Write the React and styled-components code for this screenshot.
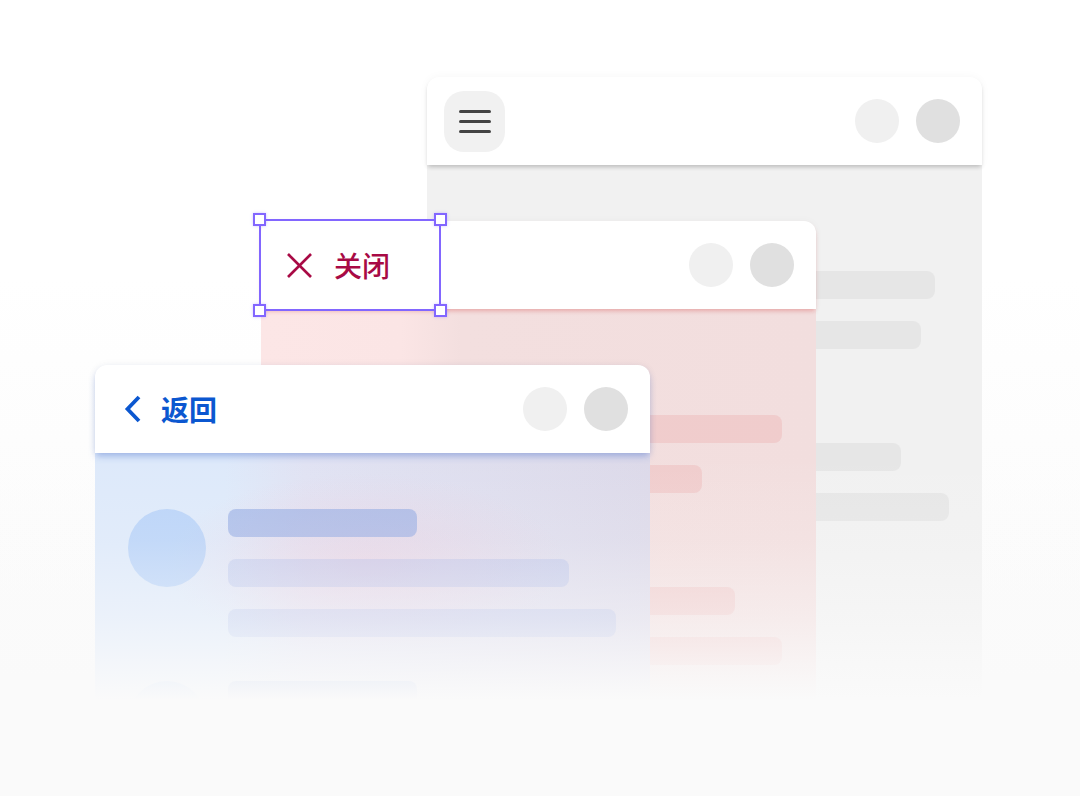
import React from 'react'
import styled, { createGlobalStyle } from 'styled-components'

const GlobalStyle = createGlobalStyle`
  body {
    margin: 0;
    background: #fafafa;
    font-family: "Noto Sans CJK SC", "Noto Sans", sans-serif;
  }
`

// body fills are painted flat: each one already holds the tint of the window behind it
const tones = {
  gray: {
    body: '#f1f1f1',
    shadow: '0 0 10px rgba(0, 0, 0, 0.04), 0 3px 4px -1px rgba(0, 0, 0, 0.2)',
    avatar: 'rgba(0, 0, 0, 0.06)',
    strong: 'rgba(0, 0, 0, 0.08)',
    light: 'rgba(0, 0, 0, 0.045)',
  },
  red: {
    body: 'linear-gradient(90deg, #fce6e6 0px, #fbe5e5 140px, #f3dfdf 200px, #f2dede 100%)',
    shadow: '0 0 10px rgba(0, 0, 0, 0.03), 0 3px 4px -1px rgba(226, 110, 110, 0.45)',
    avatar: 'rgba(230, 140, 140, 0.35)',
    strong: 'rgba(225, 120, 120, 0.4)',
    light: 'rgba(232, 140, 140, 0.22)',
  },
  blue: {
    body: `radial-gradient(ellipse 200px 90px at 270px 110px, rgba(236, 200, 216, 0.5), rgba(236, 200, 216, 0) 100%),
      linear-gradient(90deg, #dde9fa 0px, #dde9fa 130px, #e0e2f3 210px, #dcd9e9 100%)`,
    shadow: '0 0 10px rgba(0, 0, 0, 0.04), 0 4px 7px -1px rgba(70, 110, 210, 0.4)',
    avatar: 'rgba(150, 190, 245, 0.5)',
    strong: 'rgba(140, 165, 225, 0.6)',
    light: 'rgba(150, 170, 230, 0.3)',
  },
}

const windows = [
  {
    id: 'menu',
    tone: 'gray',
    left: 427,
    top: 77,
    pad: 17,
    rows: [
      [190, 375, 361],
      [190, 341, 389],
    ],
  },
  {
    id: 'close',
    tone: 'red',
    left: 261,
    top: 221,
    pad: 25,
    rows: [
      [189, 388, 308],
      [189, 341, 388],
    ],
  },
  {
    id: 'back',
    tone: 'blue',
    left: 95,
    top: 365,
    pad: 28,
    rows: [
      [189, 341, 388],
      [189, 341, 388],
    ],
  },
]

export default function App() {
  return (
    <>
      <GlobalStyle />
      <Stage>
        {windows.map((w) => (
          <Window key={w.id} $left={w.left} $top={w.top}>
            <Header $shadow={tones[w.tone].shadow} $pad={w.pad}>
              <Leading kind={w.id} />
              <Actions>
                <Dot $shade="#f0f0f0" />
                <Dot $shade="#e0e0e0" />
              </Actions>
              {w.id === 'close' && <Selection />}
            </Header>
            <Body $fill={tones[w.tone].body}>
              {w.rows.map((row, i) => (
                <Row key={i}>
                  <Avatar $color={tones[w.tone].avatar} />
                  <Lines>
                    {row.map((width, j) => (
                      <Bar
                        key={j}
                        $width={width}
                        $color={j === 0 ? tones[w.tone].strong : tones[w.tone].light}
                      />
                    ))}
                  </Lines>
                </Row>
              ))}
            </Body>
          </Window>
        ))}
        <Fade />
      </Stage>
    </>
  )
}

function Leading({ kind }) {
  if (kind === 'menu') {
    return (
      <MenuButton>
        <svg width="32" height="23" viewBox="0 0 32 23">
          <g stroke="#444" strokeWidth="3" strokeLinecap="round">
            <line x1="1.5" y1="1.5" x2="30.5" y2="1.5" />
            <line x1="1.5" y1="11.5" x2="30.5" y2="11.5" />
            <line x1="1.5" y1="21.5" x2="30.5" y2="21.5" />
          </g>
        </svg>
      </MenuButton>
    )
  }
  if (kind === 'close') {
    return (
      <Label $color="#a80a45" $weight={500} $gap={21}>
        <svg width="27" height="27" viewBox="0 0 27 27">
          <g stroke="#a80a45" strokeWidth="2.6">
            <line x1="2" y1="2" x2="25" y2="25" />
            <line x1="25" y1="2" x2="2" y2="25" />
          </g>
        </svg>
        <span>关闭</span>
      </Label>
    )
  }
  return (
    <Label $color="#0b57d0" $weight={700} $gap={18}>
      <svg width="20" height="30" viewBox="0 0 20 30">
        <polyline
          points="16,3 4.5,15 16,27"
          fill="none"
          stroke="#0b57d0"
          strokeWidth="3.8"
        />
      </svg>
      <span>返回</span>
    </Label>
  )
}

function Selection() {
  return (
    <SelectionBox>
      <Handle $x="left" $y="top" />
      <Handle $x="right" $y="top" />
      <Handle $x="left" $y="bottom" />
      <Handle $x="right" $y="bottom" />
    </SelectionBox>
  )
}

const Stage = styled.div`
  position: relative;
  width: 1080px;
  height: 796px;
  overflow: hidden;
  background: linear-gradient(180deg, #ffffff 35%, #fafafa 85%);
`

const Window = styled.div`
  position: absolute;
  left: ${(p) => p.$left}px;
  top: ${(p) => p.$top}px;
  width: 555px;
  bottom: 70px;
  display: flex;
  flex-direction: column;
`

const Header = styled.div`
  position: relative;
  z-index: 2;
  height: 88px;
  flex-shrink: 0;
  display: flex;
  align-items: center;
  justify-content: space-between;
  padding: 0 22px 0 ${(p) => p.$pad}px;
  background: #fff;
  border-radius: 12px 12px 0 0;
  box-shadow: ${(p) => p.$shadow};
`

const Actions = styled.div`
  display: flex;
  gap: 17px;
`

const Dot = styled.div`
  width: 44px;
  height: 44px;
  border-radius: 50%;
  background: ${(p) => p.$shade};
`

const MenuButton = styled.div`
  width: 61px;
  height: 61px;
  border-radius: 20px;
  background: #f1f1f1;
  display: flex;
  align-items: center;
  justify-content: center;

  svg {
    margin-top: 1px;
  }
`

const Label = styled.div`
  display: flex;
  align-items: center;
  gap: ${(p) => p.$gap}px;
  color: ${(p) => p.$color};
  font-size: 28px;
  font-weight: ${(p) => p.$weight};
  line-height: 1;

  span {
    padding-bottom: 1px;
  }
`

const SelectionBox = styled.div`
  position: absolute;
  left: -2px;
  top: -2px;
  width: 182px;
  height: 92px;
  box-sizing: border-box;
  border: 2px solid #8266ff;
`

const Handle = styled.div`
  position: absolute;
  ${(p) => p.$x}: -8px;
  ${(p) => p.$y}: -8px;
  width: 13px;
  height: 13px;
  box-sizing: border-box;
  background: #fff;
  border: 2px solid #8266ff;
  box-shadow: 0 0 3px rgba(130, 102, 255, 0.35);
`

const Body = styled.div`
  flex: 1;
  display: flex;
  flex-direction: column;
  gap: 44px;
  padding: 56px 0 0 33px;
  overflow: hidden;
  background: ${(p) => p.$fill};
`

const Row = styled.div`
  display: flex;
  gap: 22px;
  align-items: flex-start;
`

const Avatar = styled.div`
  width: 78px;
  height: 78px;
  flex-shrink: 0;
  border-radius: 50%;
  background: ${(p) => p.$color};
`

const Lines = styled.div`
  display: flex;
  flex-direction: column;
  gap: 22px;
`

const Bar = styled.div`
  width: ${(p) => p.$width}px;
  height: 28px;
  border-radius: 8px;
  background: ${(p) => p.$color};
`

const Fade = styled.div`
  position: absolute;
  left: 0;
  right: 0;
  top: 455px;
  bottom: 0;
  pointer-events: none;
  background: linear-gradient(
    180deg,
    rgba(250, 250, 250, 0) 0px,
    rgba(250, 250, 250, 0.15) 85px,
    rgba(250, 250, 250, 0.5) 165px,
    #fafafa 245px
  );
`
